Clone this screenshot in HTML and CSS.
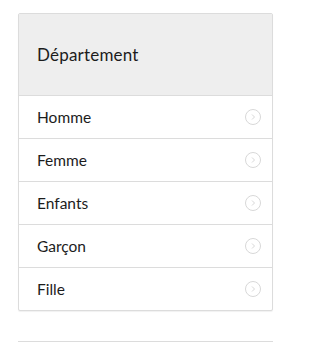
FILE: index.html
```html
<!DOCTYPE html>
<html lang="fr">
<head>
<meta charset="utf-8">
<link rel="stylesheet" href="styles.css">
</head>
<body>
<div class="page">
  <div class="card">
    <div class="card-header">Département</div>
    <ul class="list">
      <li class="item"><span>Homme</span><svg class="chev" viewBox="0 0 16 16"><circle cx="8" cy="8" r="7.5"/><path d="M7 5.5 L9.5 8 L7 10.5"/></svg></li>
      <li class="item"><span>Femme</span><svg class="chev" viewBox="0 0 16 16"><circle cx="8" cy="8" r="7.5"/><path d="M7 5.5 L9.5 8 L7 10.5"/></svg></li>
      <li class="item"><span>Enfants</span><svg class="chev" viewBox="0 0 16 16"><circle cx="8" cy="8" r="7.5"/><path d="M7 5.5 L9.5 8 L7 10.5"/></svg></li>
      <li class="item"><span>Garçon</span><svg class="chev" viewBox="0 0 16 16"><circle cx="8" cy="8" r="7.5"/><path d="M7 5.5 L9.5 8 L7 10.5"/></svg></li>
      <li class="item"><span>Fille</span><svg class="chev" viewBox="0 0 16 16"><circle cx="8" cy="8" r="7.5"/><path d="M7 5.5 L9.5 8 L7 10.5"/></svg></li>
    </ul>
  </div>
  <div class="divider"></div>
</div>
</body>
</html>
```
FILE: styles.css
```css
html, body {
  margin: 0;
  padding: 0;
  background: #fff;
}
body {
  font-family: Lato, "Open Sans", sans-serif;
  color: #1c1c1c;
}
.page {
  width: 255px;
  padding: 13px 0 0 18px;
}
.card {
  border: 1px solid #dcdcdc;
  border-radius: 2px;
  box-shadow: 0 1px 1px rgba(0,0,0,0.06);
  background: #fff;
}
.card-header {
  height: 81px;
  background: #eeeeee;
  border-bottom: 1px solid #dcdcdc;
  display: flex;
  align-items: center;
  padding-left: 18px;
  font-size: 17px;
  letter-spacing: 0.2px;
}
.list {
  list-style: none;
  margin: 0;
  padding: 0;
}
.item {
  height: 42px;
  display: flex;
  align-items: center;
  justify-content: space-between;
  padding: 0 11px 0 18px;
  font-size: 15.5px;
  border-bottom: 1px solid #dcdcdc;
}
.item:last-child {
  border-bottom: none;
}
.chev {
  width: 16px;
  height: 16px;
  fill: none;
  stroke: #d8d8d8;
  stroke-width: 1;
}
.divider {
  margin-top: 30px;
  border-top: 1px solid #dcdcdc;
}
```
